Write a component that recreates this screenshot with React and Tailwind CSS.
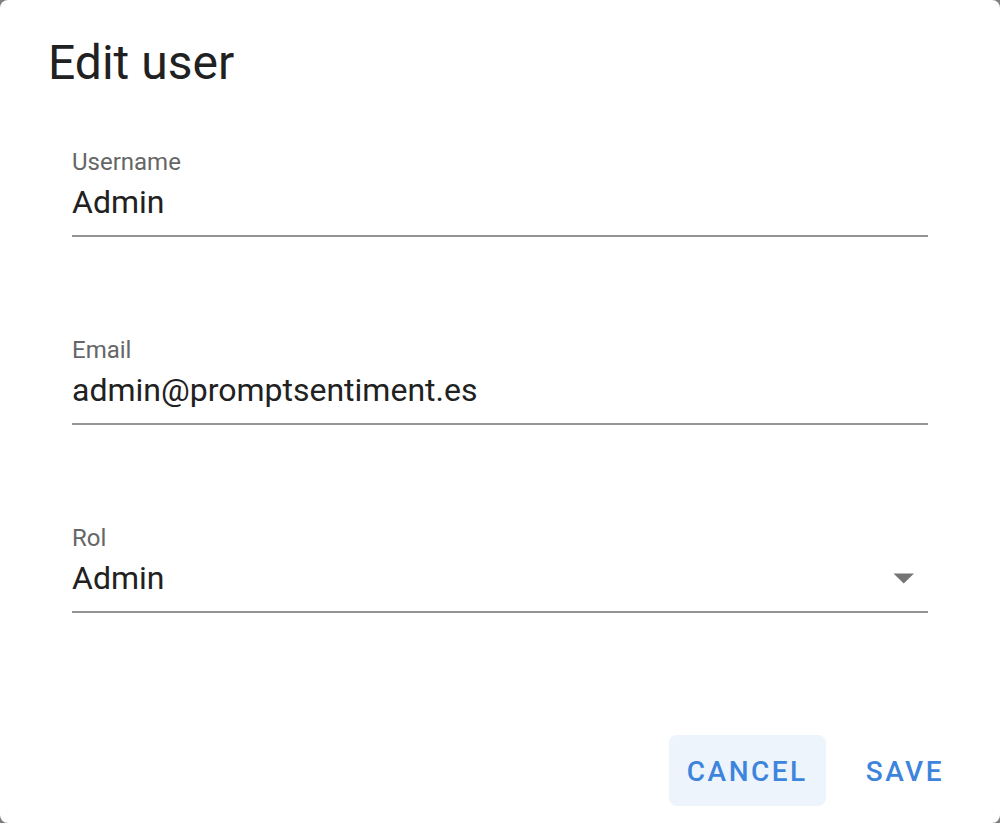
import React from 'react';

const fields = [
  { label: 'Username', value: 'Admin' },
  { label: 'Email', value: 'admin@promptsentiment.es' },
  { label: 'Rol', value: 'Admin', select: true },
];

function Field({ label, value, select }) {
  return (
    <div className="flex flex-col">
      <label className="text-[24px] leading-[28px] text-[#666666]">{label}</label>
      <div className="mt-[7px] flex items-center border-b-2 border-[#949494] pb-[14px]">
        <span className="flex-1 text-[32px] leading-[38px] text-[#212121]">{value}</span>
        {select && (
          // flecha del select
          <svg width="22" height="11" viewBox="0 0 22 11" className="mr-[13px]">
            <path d="M0.5 0.5 L21 0.5 L10.75 10.5 Z" fill="#757575" />
          </svg>
        )}
      </div>
    </div>
  );
}

export default function App() {
  return (
    <div className="h-[823px] w-full bg-[#7f7f7f]" style={{ fontFamily: 'Roboto, "Liberation Sans", sans-serif' }}>
      <div className="flex h-full flex-col rounded-[8px] bg-white">
        <h2 className="pl-[48px] pt-[35px] text-[48px] font-normal leading-[56px] text-[#212121]">Edit user</h2>

        <div className="mt-[57px] flex flex-col gap-[99px] px-[72px]">
          {fields.map((f) => (
            <Field key={f.label} {...f} />
          ))}
        </div>

        <div className="mt-auto flex justify-end gap-[22px] pb-[17px] pr-[38px]">
          <button className="flex h-[71px] items-center rounded-[8px] bg-[#eef4fc] px-[18px] pt-[3px] text-[28px] font-medium uppercase leading-none tracking-[2.5px] text-[#3d85dc]">
            Cancel
          </button>
          <button className="flex h-[71px] items-center rounded-[8px] px-[18px] pt-[3px] text-[28px] font-medium uppercase leading-none tracking-[2.5px] text-[#3d85dc]">
            Save
          </button>
        </div>
      </div>
    </div>
  );
}
